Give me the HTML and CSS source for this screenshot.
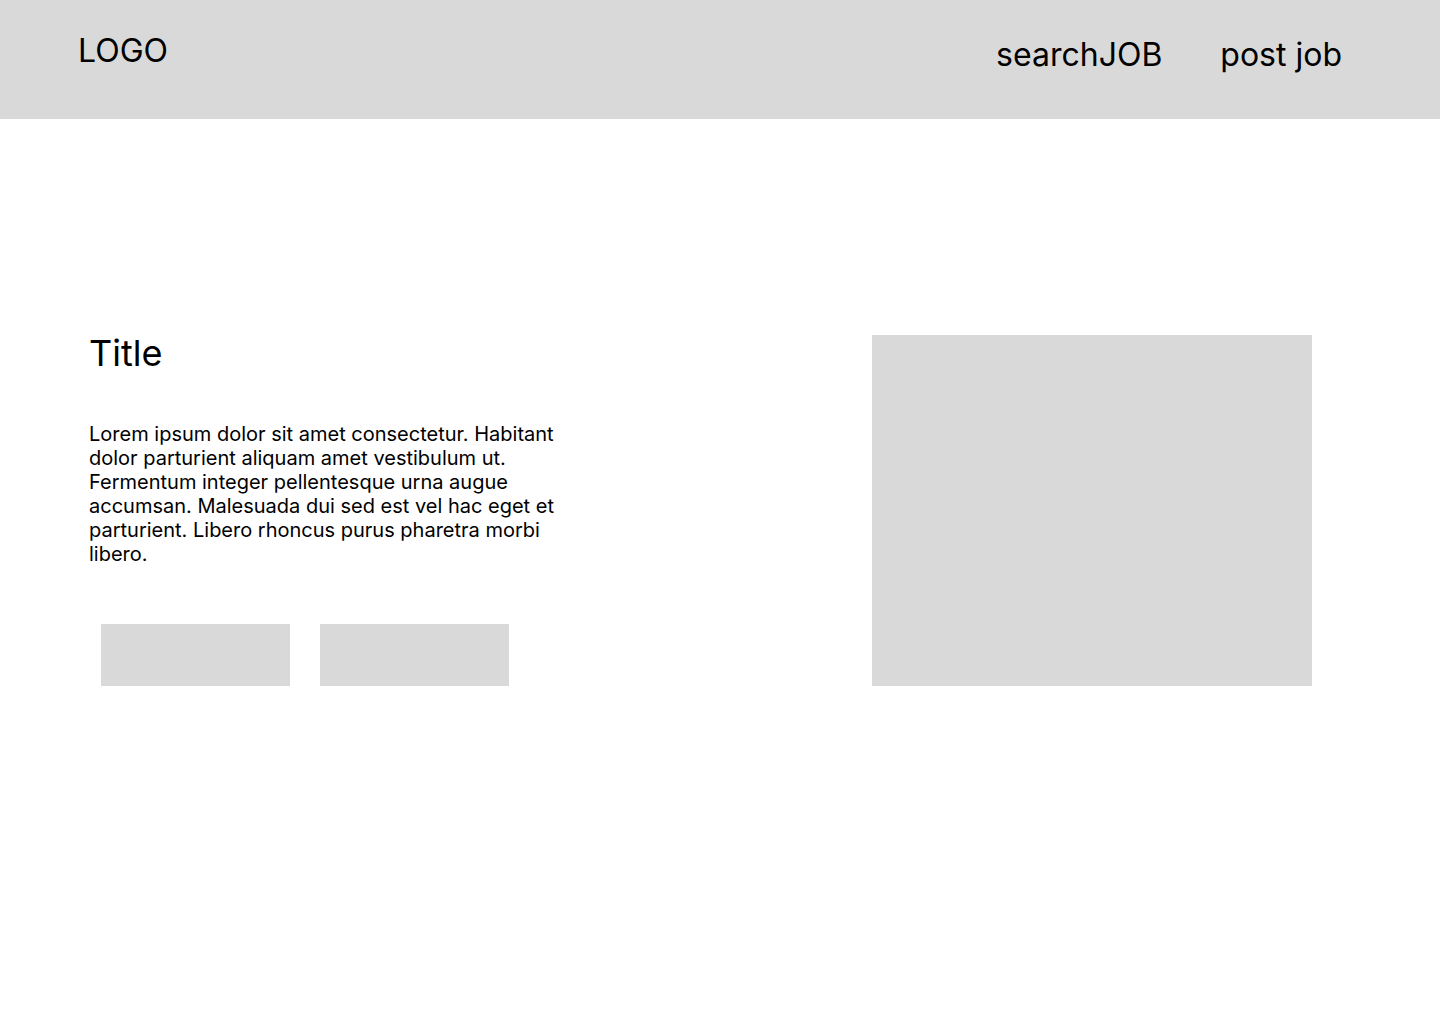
FILE: index.html
```html
<!DOCTYPE html>
<html lang="en">
<head>
<meta charset="utf-8">
<title>Jobs</title>
<link rel="stylesheet" href="styles.css">
</head>
<body>
<header class="topbar">
  <div class="logo">LOGO</div>
  <nav class="nav">
    <a class="nav-link" href="#">searchJOB</a>
    <a class="nav-link" href="#">post job</a>
  </nav>
</header>
<main class="hero">
  <section class="hero-text">
    <h1 class="title">Title</h1>
    <p class="lead">Lorem ipsum dolor sit amet consectetur. Habitant dolor parturient aliquam amet vestibulum ut. Fermentum integer pellentesque urna augue accumsan. Malesuada dui sed est vel hac eget et parturient. Libero rhoncus purus pharetra morbi libero.</p>
    <div class="actions">
      <div class="btn"></div>
      <div class="btn"></div>
    </div>
  </section>
  <div class="hero-image"></div>
</main>
</body>
</html>
```

FILE: styles.css
```css
* { box-sizing: border-box; }
html, body { margin: 0; padding: 0; background: #ffffff; }
body {
  font-family: Inter, "Noto Sans", "Liberation Sans", sans-serif;
  color: #000;
  width: 1440px;
  min-height: 1024px;
}
.topbar {
  height: 119px;
  background: #d9d9d9;
  display: flex;
  justify-content: space-between;
  align-items: flex-start;
  padding: 0 98px 0 78px;
}
.logo {
  font-size: 32px;
  line-height: normal;
  margin-top: 31px;
}
.nav {
  display: flex;
  gap: 58px;
  margin-top: 35px;
}
.nav-link {
  font-size: 32px;
  line-height: normal;
  color: #000;
  text-decoration: none;
}
.hero {
  display: flex;
  align-items: flex-start;
  padding: 212px 128px 0 89px;
}
.hero-text {
  flex: 0 0 480px;
}
.title {
  font-size: 36px;
  font-weight: 400;
  line-height: normal;
  margin: 0;
}
.lead {
  font-size: 20px;
  line-height: 24px;
  margin: 47px 0 0;
}
.actions {
  display: flex;
  gap: 30px;
  margin: 58px 0 0 12px;
}
.btn {
  width: 189px;
  height: 62px;
  background: #d9d9d9;
}
.hero-image {
  margin-left: auto;
  margin-top: 4px;
  width: 440px;
  height: 351px;
  background: #d9d9d9;
}
```
